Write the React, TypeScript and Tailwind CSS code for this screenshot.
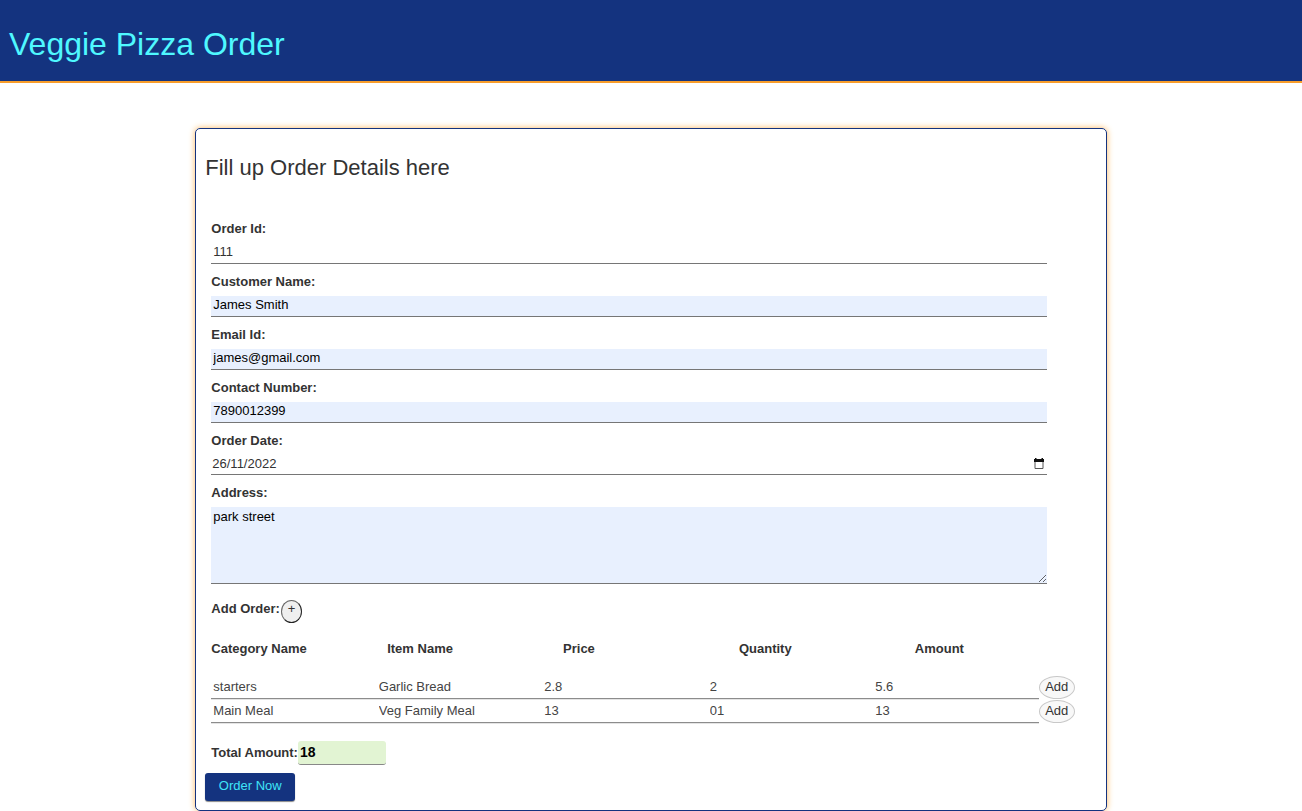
import { useState } from "react";

const fieldClass =
  "block w-full border-b border-[#767676] px-0.5 pb-1 text-[13px] leading-4 outline-none";

type TextFieldProps = {
  id: string;
  label: string;
  type?: string;
  initial: string;
  filled?: boolean;
};

function TextField({ id, label, type = "text", initial, filled = false }: TextFieldProps) {
  return (
    <div className="pt-2">
      <label htmlFor={id} className="mb-1 block text-[13px] leading-5 font-bold">
        {label}
      </label>
      <input
        id={id}
        type={type}
        defaultValue={initial}
        className={`${fieldClass} h-[21px] ${filled ? "bg-[#e8f0fe] text-black" : "bg-white"}`}
      />
    </div>
  );
}

function CalendarIcon() {
  return (
    <svg viewBox="0 0 10 11" className="h-[11px] w-[10px]" aria-hidden="true">
      <path d="M1.5 3.5h7.5v7h-8v-7z" fill="none" stroke="#555" />
      <path d="M1 0h1.5v1h5V0H9v1h1v3H0V1h1z" fill="#111" />
    </svg>
  );
}

const columns = ["Category Name", "Item Name", "Price", "Quantity", "Amount"];

const rows = [
  ["starters", "Garlic Bread", "2.8", "2", "5.6"],
  ["Main Meal", "Veg Family Meal", "13", "01", "13"],
];

export default function App() {
  const [items, setItems] = useState(rows);
  const addRow = () => setItems((current) => [...current, ["", "", "", "", ""]]);

  return (
    <div className="bg-white font-['Liberation_Sans',Arial,sans-serif] text-[#333]">
      <header className="border-b-2 border-[#f89d2a] bg-[#14337f] px-[9px] pt-6 pb-[17px]">
        <h1 className="text-[32px] leading-10 text-[#4ff8ff]">Veggie Pizza Order</h1>
      </header>

      <main className="mx-auto mt-[45px] w-[70%] rounded-[5px] border border-[#14337f] px-[9px] pt-[23px] pb-[9px] shadow-[0_0_6px_#ffb85c]">
        <h2 className="text-[22px] leading-8">Fill up Order Details here</h2>

        <form onSubmit={(event) => event.preventDefault()}>
          <div className="px-1.5 pt-[27px]">
            <div className="w-[95%]">
              <TextField id="order-id" label="Order Id:" initial="111" />
              <TextField id="customer-name" label="Customer Name:" initial="James Smith" filled />
              <TextField id="email" label="Email Id:" type="email" initial="james@gmail.com" filled />
              <TextField id="contact" label="Contact Number:" type="tel" initial="7890012399" filled />

              <div className="pt-2">
                <label htmlFor="order-date" className="mb-1 block text-[13px] leading-5 font-bold">
                  Order Date:
                </label>
                <div className="flex h-5 items-center border-b border-[#767676] pr-[3px] pb-0.5">
                  <input
                    id="order-date"
                    type="text"
                    defaultValue="26/11/2022"
                    className="min-w-0 flex-1 px-px text-[13px] leading-4 outline-none"
                  />
                  <button type="button" aria-label="Choose date">
                    <CalendarIcon />
                  </button>
                </div>
              </div>

              <div className="pt-2">
                <label htmlFor="address" className="mb-1 block text-[13px] leading-5 font-bold">
                  Address:
                </label>
                <textarea
                  id="address"
                  defaultValue="park street"
                  className="block h-[77px] w-full border-b border-[#767676] bg-[#e8f0fe] px-0.5 py-0.5 text-[13px] leading-4 text-black outline-none"
                />
              </div>
            </div>

            <div className="mt-[15px] flex items-center gap-px">
              <span className="pb-1 text-[13px] leading-5 font-bold">Add Order:</span>
              <button
                type="button"
                onClick={addRow}
                aria-label="Add order row"
                className="h-[23px] w-[21px] rounded-[50%] border border-t-[#666] border-r-[#222] border-b-[#222] border-l-[#666] bg-[#efefef] pb-1 text-[13px] leading-4"
              >
                +
              </button>
            </div>

            <table className="mt-4 block w-full text-[13px]">
              <thead className="block">
                <tr className="grid grid-cols-5">
                  {columns.map((column) => (
                    <th key={column} scope="col" className="text-left leading-5 font-bold">
                      {column}
                    </th>
                  ))}
                </tr>
              </thead>
              <tbody className="block pt-4">
                {items.map((item, rowIndex) => (
                  <tr key={rowIndex} className="flex h-6 items-end pr-4">
                    {item.map((value, columnIndex) => (
                      <td key={columns[columnIndex]} className="min-w-0 flex-1 p-0">
                        <input
                          aria-label={columns[columnIndex]}
                          defaultValue={value}
                          className="block h-[22px] w-full border-b border-[#8c8c8c] px-0.5 pb-0.5 leading-4 text-[#444] shadow-[0_1px_0_#e4e4e4] outline-none"
                        />
                      </td>
                    ))}
                    <td className="p-0">
                      <button
                        type="button"
                        className="block h-[23px] w-9 rounded-[50%] border border-[#c8c8c8] bg-[#f8f8f8] pb-0.5 leading-4"
                      >
                        Add
                      </button>
                    </td>
                  </tr>
                ))}
              </tbody>
            </table>

            <div className="mt-[18px] flex items-center">
              <label htmlFor="total" className="text-[13px] leading-5 font-bold">
                Total Amount:
              </label>
              <input
                id="total"
                readOnly
                value="18"
                className="h-6 w-[88px] rounded-[3px] border-b border-[#888] bg-[#e2f4d3] px-0.5 pb-0.5 text-[14px] leading-5 font-bold text-black outline-none"
              />
            </div>
          </div>

          <button
            type="submit"
            className="mt-2 block h-7 w-[90px] rounded-[3px] bg-[#14337f] pb-0.5 text-[13px] leading-4 text-[#3fe4f8] shadow-[0_1px_1px_#888]"
          >
            Order Now
          </button>
        </form>
      </main>
    </div>
  );
}
